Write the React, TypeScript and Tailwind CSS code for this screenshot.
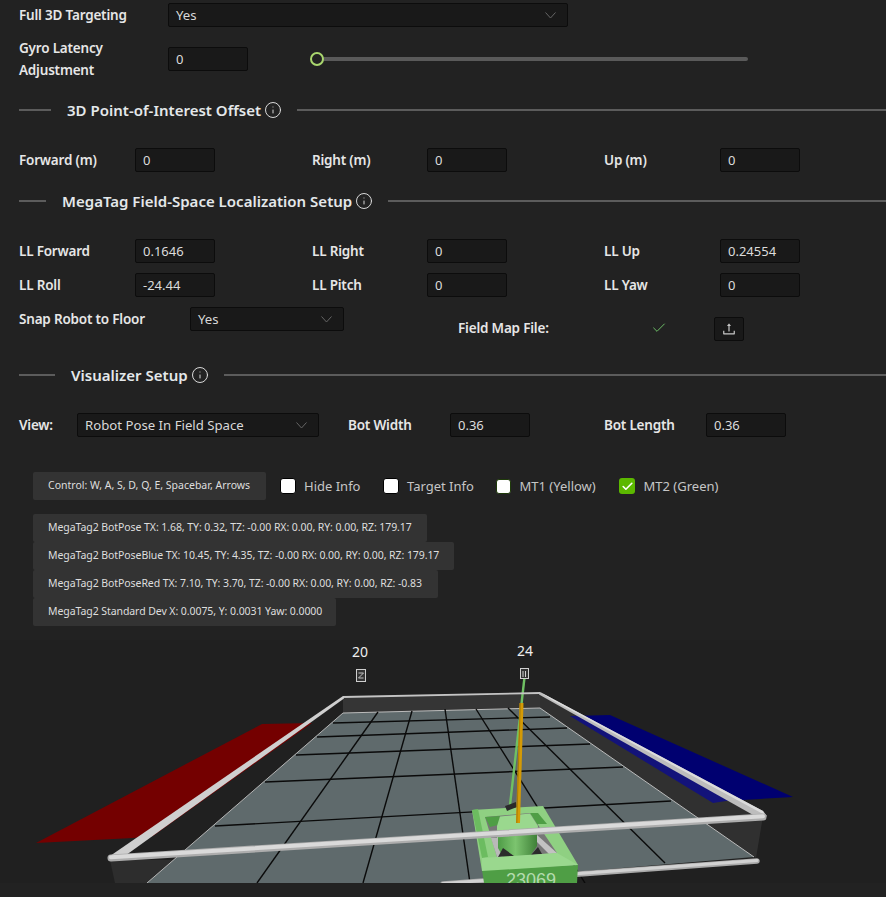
import React from "react";
import { Info, Check } from "lucide-react";
import { AiOutlineUpload } from "react-icons/ai";

const font = "font-['Noto_Sans','Open_Sans',sans-serif]";

function Label({ children }: { children: React.ReactNode }) {
  return <span className="block text-[13.5px] leading-[18px] font-semibold tracking-[-0.2px] text-[#e6e6e6] whitespace-nowrap">{children}</span>;
}

function Field({ value, className = "w-20" }: { value: string; className?: string }) {
  return (
    <div className={`h-6 ${className} flex items-center rounded-[2px] border border-[#0c0c0c] bg-[#191919] pl-[7px] pt-px text-[13px] text-[#dcdcdc]`}>
      {value}
    </div>
  );
}

function Select({ value, className }: { value: string; className: string }) {
  return (
    <div className={`h-6 ${className} flex items-center justify-between rounded-[2px] border border-[#0c0c0c] bg-[#191919] pl-[7px] pr-[11px] text-[13.2px] text-[#d8d8d8]`}>
      <span className="pt-px">{value}</span>
      <svg width="11" height="7" viewBox="0 0 11 7" fill="none" stroke="#666666" strokeWidth="1">
        <polyline points="0.5,0.5 5.5,6 10.5,0.5" />
      </svg>
    </div>
  );
}

function Divider({ title, lead, className }: { title: string; lead: string; className: string }) {
  return (
    <div className={`flex h-5 items-center pl-[19px] ${className}`}>
      <div className={`h-[2px] bg-[#5c5c5c] ${lead}`} />
      <span className="ml-4 whitespace-nowrap text-[15px] font-semibold tracking-[0.01px] text-[#e4e8ea]">{title}</span>
      <Info size={18} strokeWidth={1.3} className="ml-[3px] text-[#dddddd]" />
      <div className="ml-[15px] h-[2px] flex-1 bg-[#5c5c5c]" />
    </div>
  );
}

function Row({ a, b, c }: { a: [string, string]; b: [string, string]; c: [string, string] }) {
  return (
    <>
      <div className="flex items-center"><Label>{a[0]}</Label></div>
      <Field value={a[1]} />
      <div />
      <div className="flex items-center"><Label>{b[0]}</Label></div>
      <Field value={b[1]} />
      <div />
      <div className="flex items-center"><Label>{c[0]}</Label></div>
      <Field value={c[1]} />
    </>
  );
}

const grid = "grid grid-cols-[116px_80px_97px_115px_80px_97px_116px_80px] pl-[19px]";

function Box({ label, checked, small }: { label: string; checked?: boolean; small?: boolean }) {
  return (
    <div className="flex items-center">
      <div
        className={`flex items-center justify-center rounded-[3px] ${
          checked
            ? "h-4 w-4 bg-[#5cb800]"
            : small
            ? "h-[15px] w-[15px] border border-[#1f3a0a] bg-white"
            : "h-4 w-4 border border-black bg-white"
        }`}
      >
        {checked && <Check size={13} strokeWidth={3} className="text-white" />}
      </div>
      <span className={`${checked || small ? "ml-[8.5px]" : "ml-2"} whitespace-nowrap pt-px text-[13px] text-[#c6c6c6]`}>{label}</span>
    </div>
  );
}

function Info2({ text, className }: { text: string; className: string }) {
  return (
    <div className={`flex h-7 items-center rounded-[2px] bg-[#333333] pl-[15px] text-[10.5px] whitespace-nowrap text-[#dedede] ${className}`}>
      {text}
    </div>
  );
}

function Field3D() {
  // y coordinates below are given in page pixels; the canvas starts at page y=640
  const T = (pts: [number, number][]) => pts.map(([x, y]) => `${x},${y - 640}`).join(" ");
  const L = (x1: number, y1: number, x2: number, y2: number, w = 1.4) => (
    <line x1={x1} y1={y1 - 640} x2={x2} y2={y2 - 640} stroke="#0a0a0a" strokeWidth={w} />
  );
  return (
    <svg width="886" height="243" viewBox="0 0 886 243" className="block bg-[#202020]">
      <defs>
        <linearGradient id="cyl" x1="0" y1="0" x2="1" y2="0">
          <stop offset="0" stopColor="#4f9c47" />
          <stop offset="0.45" stopColor="#7cc46f" />
          <stop offset="1" stopColor="#3f8038" />
        </linearGradient>
      </defs>

      {/* alliance zones */}
      <polygon points={T([[36, 843], [262, 724], [312, 723], [153, 836], [133, 838]])} fill="#740000" />
      <polygon points={T([[570, 716], [610, 715], [793, 797], [726, 801], [713, 803]])} fill="#000070" />

      {/* walls */}
      <polygon points={T([[343, 697], [540, 693], [540, 708], [343, 713]])} fill="#353535" />
      <polygon points={T([[540, 693], [763, 816], [756, 858], [540, 708]])} fill="#ffffff" fillOpacity="0.075" />
      <polygon points={T([[110, 860], [115, 883], [147, 883], [177, 860]])} fill="#2d2d2d" />

      {/* floor */}
      <polygon points={T([[343, 713], [540, 708], [754, 857], [443, 883], [147, 883]])} fill="#5f6a6c" />
      <polyline points={T([[343, 713], [147, 883]])} stroke="#b5b5b5" strokeWidth="1" fill="none" />
      <polyline points={T([[343, 713], [540, 708], [754, 857]])} stroke="#bcbcbc" strokeWidth="1" fill="none" />

      {/* grid */}
      {L(333, 723, 550, 717)}
      {L(317, 737, 567, 728)}
      {L(296, 755, 590, 744)}
      {L(265, 782, 623, 767)}
      {L(215, 826, 671, 801)}
      {L(378, 712, 257, 883)}
      {L(412, 711, 363, 883)}
      {L(445, 709, 470, 883)}
      {L(476, 709, 585, 883)}
      {L(508, 708, 665, 863)}

      {/* lower front rail */}
      <line x1="443" y1={884 - 640} x2="757" y2={861 - 640} stroke="#a9a9a9" strokeWidth="5.5" strokeLinecap="round" />
      <line x1="443" y1={883.5 - 640} x2="757" y2={860.5 - 640} stroke="#d2d2d2" strokeWidth="3" strokeLinecap="round" />

      {/* robot */}
      <polygon points={T([[472, 810], [543, 806], [578, 865], [482, 871]])} fill="#8fd082" />
      <polygon points={T([[472, 810], [478, 809], [488, 857], [482, 858]])} fill="#6cbc60" />
      <polygon points={T([[485, 817], [530, 813], [557, 853], [497, 857]])} fill="#777777" />
      <polygon points={T([[485, 817], [500, 816], [498, 825], [490, 827]])} fill="#4f9e45" />
      <polygon points={T([[530, 813], [538, 813], [547, 824], [537, 824]])} fill="#4f9e45" />
      <polygon points={T([[500, 816.5], [530, 813.5], [538, 826], [537, 836], [497, 838], [497, 826]])} fill="#9ad88e" />
      <polygon points={T([[491, 838], [497, 857], [503, 857], [498, 838]])} fill="#b9b9b9" />
      <polygon points={T([[537, 835], [557, 853], [549, 854], [537, 842]])} fill="#c2c2c2" />
      <polygon points={T([[498, 834], [537, 832], [537, 846], [531, 855], [503, 857], [498, 848]])} fill="url(#cyl)" />
      <polygon points={T([[498, 857], [503, 848], [514, 856]])} fill="#2b2b2b" />
      <polygon points={T([[531, 855], [538, 847], [542, 854]])} fill="#2b2b2b" />
      <polygon points={T([[482, 870], [578, 865], [577, 883], [484, 883]])} fill="#4f9e45" />
      <polygon points={T([[482, 858], [497, 857], [557, 853], [578, 865], [482, 871]])} fill="#9ad88e" />
      <text x="531" y={886 - 640} textAnchor="middle" fontSize="18" fill="#b4dbae" fontFamily="Liberation Sans, sans-serif">23069</text>

      {/* camera + target rays */}
      <line x1="525" y1={673 - 640} x2="510" y2={805 - 640} stroke="#6fc063" strokeWidth="2.4" />
      <polygon points={T([[505, 806], [516, 802], [517, 807], [507, 811]])} fill="#2a2a2a" />
      <line x1="521.5" y1={703 - 640} x2="518" y2={823 - 640} stroke="#d49a05" strokeWidth="4" />
      <line x1="520.3" y1={703 - 640} x2="516.8" y2={823 - 640} stroke="#a87a08" strokeWidth="1" />

      {/* top rails */}
      <line x1="343" y1={697 - 640} x2="540" y2={693 - 640} stroke="#c4c4c4" strokeWidth="1.8" />
      <polygon points={T([[540, 692], [763, 811], [767, 816], [762, 820], [539, 694.5]])} fill="#bdbdbd" />
      <polygon points={T([[540, 692], [763, 811], [765, 815], [552, 700]])} fill="#dcdcdc" />
      <polygon points={T([[343, 696], [344, 698.5], [122, 858], [110, 856]])} fill="#cfcfcf" />
      <line x1="111" y1={858 - 640} x2="763" y2={817 - 640} stroke="#adadad" strokeWidth="7" strokeLinecap="round" />
      <line x1="111" y1={857.3 - 640} x2="763" y2={816.3 - 640} stroke="#dadada" strokeWidth="4" strokeLinecap="round" />

      {/* tags */}
      <text x="360" y={657 - 640} textAnchor="middle" fontSize="14" fill="#eeeeee" fontFamily="Noto Sans, sans-serif">20</text>
      <text x="525" y={656 - 640} textAnchor="middle" fontSize="14" fill="#eeeeee" fontFamily="Noto Sans, sans-serif">24</text>
      <rect x="356.5" y={669.5 - 640} width="9" height="12" fill="#333" stroke="#cfcfcf" strokeWidth="1" />
      <path d={`M358.5 ${673 - 640}h5l-5 5h5`} fill="none" stroke="#d0d0d0" strokeWidth="0.9" />
      <rect x="520.5" y={668.5 - 640} width="8" height="10" fill="#333" stroke="#cfcfcf" strokeWidth="1" />
      <path d={`M523 ${671 - 640}v6M525.5 ${671 - 640}v6`} stroke="#d0d0d0" strokeWidth="1" />
    </svg>
  );
}

export default function App() {
  return (
    <div className={`min-h-[897px] overflow-hidden bg-[#222222] pt-[3px] ${font}`}>
      <div className="flex h-6 items-center pl-[19px]">
        <div className="w-[149px]"><Label>Full 3D Targeting</Label></div>
        <Select value="Yes" className="w-[400px]" />
      </div>

      <div className="mt-[10px] flex h-11 items-center pl-[19px]">
        <div className="flex w-[149px] flex-col gap-1">
          <Label>Gyro Latency</Label>
          <Label>Adjustment</Label>
        </div>
        <Field value="0" />
        <div className="relative ml-[62px] flex h-[14px] w-[438px] items-center">
          <div className="ml-[7px] h-1 w-full rounded-full bg-[#5a5a5a]" />
          <div className="absolute left-0 top-0 h-[14px] w-[14px] rounded-full border-2 border-[#a9d66e] bg-[#222222]" />
        </div>
      </div>

      <Divider title="3D Point-of-Interest Offset" lead="w-8" className="mt-[19px]" />

      <div className={`${grid} mt-[28px]`}>
        <Row a={["Forward (m)", "0"]} b={["Right (m)", "0"]} c={["Up (m)", "0"]} />
      </div>

      <Divider title="MegaTag Field-Space Localization Setup" lead="w-[27px]" className="mt-[19px]" />

      <div className={`${grid} mt-[28px] gap-y-[10px]`}>
        <Row a={["LL Forward", "0.1646"]} b={["LL Right", "0"]} c={["LL Up", "0.24554"]} />
        <Row a={["LL Roll", "-24.44"]} b={["LL Pitch", "0"]} c={["LL Yaw", "0"]} />
      </div>

      <div className="mt-[10px] flex h-[34px] items-start pl-[19px]">
        <div className="flex h-6 w-[171px] items-center"><Label>Snap Robot to Floor</Label></div>
        <Select value="Yes" className="w-[154px]" />
        <div className="ml-[114px] mt-[10px] flex h-6 items-center">
          <div className="mb-[2px] w-[193px]"><Label>Field Map File:</Label></div>
          <Check size={16} strokeWidth={1.4} className="mb-[2px] text-[#72c96c]" />
          <div className="ml-[47px] flex h-6 w-[30px] items-center justify-center rounded-[2px] border border-[#0c0c0c] bg-[#191919]">
            <AiOutlineUpload size={16} className="text-[#c8c8c8]" />
          </div>
        </div>
      </div>

      <Divider title="Visualizer Setup" lead="w-9" className="mt-[24px]" />

      <div className="mt-[28px] flex h-6 items-center pl-[19px]">
        <div className="w-[58px]"><Label>View:</Label></div>
        <Select value="Robot Pose In Field Space" className="w-[242px]" />
        <div className="ml-[29px] w-[102px]"><Label>Bot Width</Label></div>
        <Field value="0.36" />
        <div className="ml-[74px] w-[102px]"><Label>Bot Length</Label></div>
        <Field value="0.36" />
      </div>

      <div className="mt-[35px] flex h-7 items-center pl-[33px]">
        <Info2 text="Control: W, A, S, D, Q, E, Spacebar, Arrows" className="w-[233px]" />
        <div className="ml-[14px] w-[103px]"><Box label="Hide Info" /></div>
        <div className="w-[113px]"><Box label="Target Info" /></div>
        <div className="w-[123px]"><Box label="MT1 (Yellow)" small /></div>
        <Box label="MT2 (Green)" checked />
      </div>

      <div className="mt-[14px] flex flex-col pl-[33px]">
        <Info2 text="MegaTag2 BotPose TX: 1.68, TY: 0.32, TZ: -0.00 RX: 0.00, RY: 0.00, RZ: 179.17" className="w-[394px] tracking-[-0.07px]" />
        <Info2 text="MegaTag2 BotPoseBlue TX: 10.45, TY: 4.35, TZ: -0.00 RX: 0.00, RY: 0.00, RZ: 179.17" className="w-[421px] tracking-[-0.07px]" />
        <Info2 text="MegaTag2 BotPoseRed TX: 7.10, TY: 3.70, TZ: -0.00 RX: 0.00, RY: 0.00, RZ: -0.83" className="w-[405px] tracking-[-0.07px]" />
        <Info2 text="MegaTag2 Standard Dev X: 0.0075, Y: 0.0031 Yaw: 0.0000" className="w-[303px] tracking-[-0.07px]" />
      </div>

      <div className="mt-[14px]">
        <Field3D />
      </div>
    </div>
  );
}
